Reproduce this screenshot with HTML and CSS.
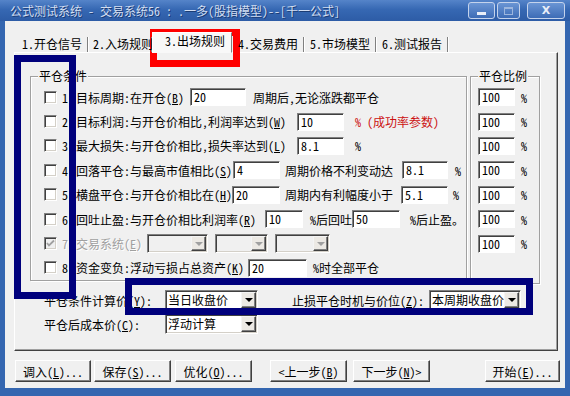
FILE: index.html
```html
<!DOCTYPE html>
<html lang="zh">
<head>
    <meta charset="UTF-8">
    <title>公式测试系统</title>
    <link rel="stylesheet" href="styles.css">
</head>
<body>
<div class="window">
    <div class="titlebar">
        <div class="title-text">公式测试系统 - 交易系统56 : .一多(股指模型)--[千一公式]</div>
        <div class="title-buttons">
            <div class="tb tb-min"><span class="min-bar"></span></div>
            <div class="tb tb-max"><span class="max-box"></span></div>
            <div class="tb tb-close">X</div>
        </div>
    </div>

    <div class="frame">
        <div class="tabs">
            <div class="tab tab-1">1.开仓信号</div>
            <div class="tab tab-2">2.入场规则</div>
            <div class="tab tab-3 selected">3.出场规则</div>
            <div class="tab tab-4">4.交易费用</div>
            <div class="tab tab-5">5.市场模型</div>
            <div class="tab tab-6">6.测试报告</div>
        </div>

        <div class="panel">
            <div class="groups">
                <div class="group group-main">
                    <span class="group-title">平仓条件</span>

                    <div class="row">
                        <span class="check"></span><span class="num">1</span>
                        <span class="lbl w114">目标周期:在开仓(<u>B</u>)</span>
                        <span class="edit w56">20</span>
                        <span class="after m7">周期后,无论涨跌都平仓</span>
                    </div>
                    <div class="row">
                        <span class="check"></span><span class="num">2</span>
                        <span class="lbl w221">目标利润:与开仓价相比,利润率达到(<u>W</u>)</span>
                        <span class="edit w47">10</span>
                        <span class="after m11 red">% (成功率参数)</span>
                    </div>
                    <div class="row">
                        <span class="check"></span><span class="num">3</span>
                        <span class="lbl w221">最大损失:与开仓价相比,损失率达到(<u>L</u>)</span>
                        <span class="edit w47">8.1</span>
                        <span class="after m11">%</span>
                    </div>
                    <div class="row">
                        <span class="check"></span><span class="num">4</span>
                        <span class="lbl w157">回落平仓:与最高市值相比(<u>S</u>)</span>
                        <span class="edit w47">4</span>
                        <span class="lbl m5 w117">周期价格不利变动达</span>
                        <span class="edit w46">8.1</span>
                        <span class="after m7">%</span>
                    </div>
                    <div class="row">
                        <span class="check"></span><span class="num">5</span>
                        <span class="lbl w156">横盘平仓:与开仓价相比在(<u>H</u>)</span>
                        <span class="edit w48">20</span>
                        <span class="lbl m5 w116">周期内有利幅度小于</span>
                        <span class="edit w47">5.1</span>
                        <span class="after m5">%</span>
                    </div>
                    <div class="row">
                        <span class="check"></span><span class="num">6</span>
                        <span class="lbl w189">回吐止盈:与开仓价相比利润率(<u>R</u>)</span>
                        <span class="edit w38">10</span>
                        <span class="lbl m7 w42">%后回吐</span>
                        <span class="edit w48">50</span>
                        <span class="after m10">%后止盈。</span>
                    </div>
                    <div class="row disabled">
                        <span class="check check-on">
                            <svg width="11" height="11" viewBox="0 0 11 11"><polyline points="2,5 4,7.5 9,2.5" fill="none" stroke="#a0a0a0" stroke-width="1.8"/></svg>
                        </span><span class="num">7</span>
                        <span class="lbl w71">交易系统(<u>E</u>)</span>
                        <span class="combo combo-off w61"><span class="combo-text"></span><span class="combo-btn"><i class="arrow"></i></span></span>
                        <span class="combo combo-off m7 w53"><span class="combo-text"></span><span class="combo-btn"><i class="arrow"></i></span></span>
                        <span class="combo combo-off m7 w55"><span class="combo-text"></span><span class="combo-btn"><i class="arrow"></i></span></span>
                    </div>
                    <div class="row">
                        <span class="check"></span><span class="num">8</span>
                        <span class="lbl w172">资金变负:浮动亏损占总资产(<u>K</u>)</span>
                        <span class="edit w59">20</span>
                        <span class="after m6">%时全部平仓</span>
                    </div>
                </div>

                <div class="group group-ratio">
                    <span class="group-title">平仓比例</span>
                    <div class="row"><span class="edit w37">100</span><span class="after m6">%</span></div>
                    <div class="row"><span class="edit w37">100</span><span class="after m6">%</span></div>
                    <div class="row"><span class="edit w37">100</span><span class="after m6">%</span></div>
                    <div class="row"><span class="edit w37">100</span><span class="after m6">%</span></div>
                    <div class="row"><span class="edit w37">100</span><span class="after m6">%</span></div>
                    <div class="row"><span class="edit w37">100</span><span class="after m6">%</span></div>
                    <div class="row"><span class="edit w37">100</span><span class="after m6">%</span></div>
                </div>
            </div>

            <div class="cond-row first">
                <span class="lbl w121">平仓条件计算价(<u>Y</u>):</span>
                <span class="combo w93"><span class="combo-text">当日收盘价</span><span class="combo-btn"><i class="arrow"></i></span></span>
                <span class="lbl m34 w137">止损平仓时机与价位(<u>Z</u>):</span>
                <span class="combo w92"><span class="combo-text">本周期收盘价</span><span class="combo-btn"><i class="arrow"></i></span></span>
            </div>
            <div class="cond-row">
                <span class="lbl w121">平仓后成本价(<u>C</u>):</span>
                <span class="combo w93"><span class="combo-text">浮动计算</span><span class="combo-btn"><i class="arrow"></i></span></span>
            </div>
        </div>

        <div class="buttons">
            <div class="btn">调入(<u>L</u>)...</div>
            <div class="btn btn-save">保存(<u>S</u>)...</div>
            <div class="btn btn-opt">优化(<u>O</u>)...</div>
            <div class="btn btn-prev">&lt;上一步(<u>B</u>)</div>
            <div class="btn btn-next">下一步(<u>N</u>)&gt;</div>
            <div class="btn btn-start">开始(<u>E</u>)...</div>
        </div>
    </div>

    <!-- annotation boxes drawn over the dialog -->
    <div class="mark mark-tab"></div>
    <div class="mark mark-left"></div>
    <div class="mark mark-bottom"></div>
</div>
</body>
</html>
```

FILE: styles.css
```css
* {
    box-sizing: border-box;
}

body {
    margin: 0;
    font-family: "Noto Sans Mono CJK SC", "Noto Sans CJK SC", sans-serif;
    font-size: 12px;
    color: #000;
    background: #3466b0;
}

.window {
    position: relative;
    width: 570px;
    height: 396px;
    overflow: hidden;
}

/* title bar */
.titlebar {
    height: 21px;
    display: flex;
    align-items: center;
    padding: 0 5px 0 10px;
    background: linear-gradient(#5584c9, #3668b3 45%, #2d5ca6);
    color: #d2def2;
    text-shadow: 1px 1px 0 #1b3c74;
}

.title-text {
    flex: 1;
    white-space: nowrap;
    line-height: 21px;
}

.title-buttons {
    display: flex;
    gap: 2px;
}

.tb {
    height: 17px;
    border: 1px solid #c4d3ec;
    border-radius: 3px;
    background: linear-gradient(#6a95d4, #3d6cb6);
    display: flex;
    align-items: center;
    justify-content: center;
    color: #e8eef8;
    font-family: "DejaVu Sans", sans-serif;
    font-weight: bold;
    font-size: 11px;
    text-shadow: none;
}

.tb-min {
    width: 27px;
    align-items: flex-end;
    padding-bottom: 3px;
}

.tb-max {
    width: 23px;
}

.tb-close {
    width: 38px;
    margin-left: 5px;
}

.min-bar {
    width: 9px;
    height: 3px;
    background: #e8eef8;
}

.max-box {
    width: 9px;
    height: 8px;
    border: 1px solid #9cb6de;
    border-top-width: 2px;
}

/* window body */
.frame {
    height: 375px;
    border: 5px solid #3466b0;
    border-top: 0;
    border-bottom-width: 8px;
    background: #f0f0f0;
    display: flex;
    flex-direction: column;
}

.tabs {
    display: flex;
    align-items: flex-end;
    height: 19px;
    margin: 12px 0 0 9px;
    position: relative;
    z-index: 1;
}

.tab {
    height: 15px;
    line-height: 14px;
    padding-left: 6px;
    border-right: 1px solid #808080;
    box-shadow: 1px 0 0 #fff;
    white-space: nowrap;
}

.tab-1 { width: 74px; padding-left: 8px; }
.tab-2 { width: 64px; padding-left: 5px; }
.tab-4 { width: 72px; }
.tab-5 { width: 72px; }
.tab-6 { width: 72px; }

.tab.selected {
    width: 80px;
    height: 21px;
    margin-bottom: -1px;
    padding-left: 12px;
    line-height: 16px;
    background: #f8f8f8;
    border: 1px solid;
    border-color: #fff #808080 transparent #fff;
    box-shadow: none;
}

.panel {
    margin-left: 9px;
    width: 544px;
    height: 299px;
    border: 1px solid;
    border-color: #fff #404040 #404040 #fff;
    box-shadow: inset -1px -1px 0 #a0a0a0;
    padding: 23px 0 0 15px;
}

.groups {
    display: flex;
    align-items: flex-start;
    gap: 3px;
}

.group {
    position: relative;
    border: 1px solid #a0a0a0;
    box-shadow: 1px 1px 0 #fff, inset 1px 1px 0 #fff;
}

.group-main {
    width: 437px;
    height: 205px;
    padding: 8px 0 0 13px;
}

.group-ratio {
    width: 70px;
    height: 208px;
    padding: 8px 0 0 7px;
}

.group-title {
    position: absolute;
    top: -8px;
    left: 7px;
    padding: 0 1px;
    background: #f0f0f0;
    line-height: 14px;
}

.row {
    display: flex;
    align-items: center;
    height: 24.4px;
    white-space: nowrap;
}

.row.disabled {
    color: #a0a0a0;
    text-shadow: 1px 1px 0 #fff;
}

.check {
    flex: none;
    width: 13px;
    height: 13px;
    background: #fff;
    border: 1px solid;
    border-color: #808080 #fff #fff #808080;
    box-shadow: inset 1px 1px 0 #404040, inset -1px -1px 0 #d4d0c8;
}

.check-on {
    background: #f0f0f0;
    display: flex;
    align-items: center;
    justify-content: center;
}

.num {
    flex: none;
    width: 14px;
    margin-left: 5px;
}

.lbl {
    flex: none;
    white-space: nowrap;
}

.after {
    flex: none;
}

.red {
    color: #cc1010;
}

.edit {
    flex: none;
    height: 18px;
    background: #fff;
    border: 1px solid;
    border-color: #808080 #fff #fff #808080;
    box-shadow: inset 1px 1px 0 #404040;
    padding-left: 3px;
    line-height: 16px;
}

.combo {
    flex: none;
    display: flex;
    height: 20px;
    background: #fff;
    border: 1px solid;
    border-color: #808080 #fff #fff #808080;
    box-shadow: inset 1px 1px 0 #404040, inset -1px -1px 0 #d4d0c8;
    padding: 1px;
}

.combo-off {
    height: 19px;
    background: #f0f0f0;
}

.combo-text {
    flex: 1;
    padding-left: 1px;
    line-height: 16px;
    white-space: nowrap;
    overflow: hidden;
}

.combo-btn {
    width: 15px;
    background: #ece9e4;
    border: 1px solid;
    border-color: #f4f4f4 #404040 #404040 #f4f4f4;
    box-shadow: inset -1px -1px 0 #808080;
    display: flex;
    align-items: center;
    justify-content: center;
}

.arrow {
    width: 0;
    height: 0;
    border-left: 4px solid transparent;
    border-right: 4px solid transparent;
    border-top: 4px solid #000;
}

.combo-off .arrow {
    border-top-color: #a0a0a0;
}

.cond-row {
    display: flex;
    align-items: center;
    height: 20px;
    margin-top: 4px;
    padding-left: 14px;
    white-space: nowrap;
}

.cond-row.first {
    margin-top: 6px;
}

/* widths and gaps of the form fields */
.w37 { width: 37px; }
.w38 { width: 38px; }
.w42 { width: 42px; }
.w46 { width: 46px; }
.w47 { width: 47px; }
.w48 { width: 48px; }
.w53 { width: 53px; }
.w55 { width: 55px; }
.w56 { width: 56px; }
.w59 { width: 59px; }
.w61 { width: 61px; }
.w71 { width: 71px; }
.w92 { width: 92px; }
.w93 { width: 93px; }
.w114 { width: 114px; }
.w116 { width: 116px; }
.w117 { width: 117px; }
.w121 { width: 121px; }
.w137 { width: 137px; }
.w156 { width: 156px; }
.w157 { width: 157px; }
.w172 { width: 172px; }
.w189 { width: 189px; }
.w221 { width: 221px; }

.m5 { margin-left: 5px; }
.m6 { margin-left: 6px; }
.m7 { margin-left: 7px; }
.m10 { margin-left: 10px; }
.m11 { margin-left: 11px; }
.m34 { margin-left: 34px; }

/* bottom buttons */
.buttons {
    display: flex;
    height: 22px;
    margin-top: 9px;
    padding: 0 5px 0 10px;
}

.btn {
    width: 77px;
    height: 22px;
    border: 1px solid;
    border-color: #fff #404040 #404040 #fff;
    box-shadow: inset -1px -1px 0 #808080;
    display: flex;
    align-items: center;
    justify-content: center;
    white-space: nowrap;
}

.btn:first-child { width: 76px; }
.btn-save { margin-left: 3px; }
.btn-opt { margin-left: 4px; }
.btn-prev { margin-left: 18px; }
.btn-next { margin-left: 6px; }

.btn-start {
    width: 75px;
    margin-left: auto;
}

/* annotation rectangles */
.mark {
    position: absolute;
    border: 7px solid #00007c;
}

.mark-tab {
    left: 150px;
    top: 29px;
    width: 90px;
    height: 38px;
    border-color: #f00;
}

.mark-left {
    left: 14px;
    top: 55px;
    width: 62px;
    height: 244px;
}

.mark-bottom {
    left: 125px;
    top: 278px;
    width: 408px;
    height: 37px;
}
```
